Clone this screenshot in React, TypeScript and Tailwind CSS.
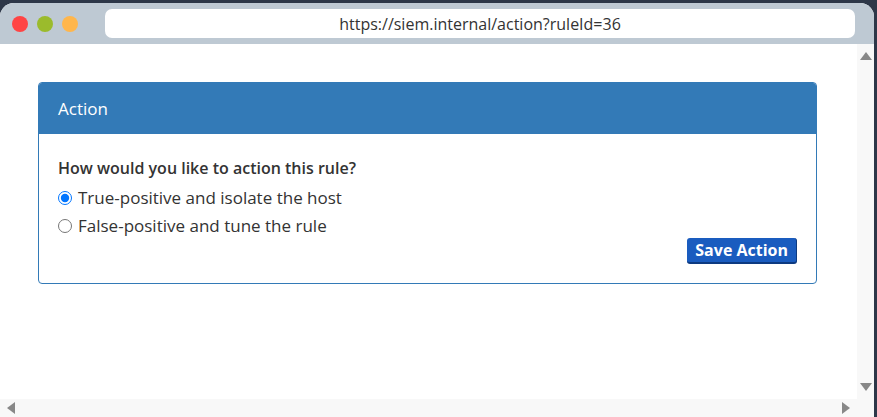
import React from "react";

export default function App() {
  const font = { fontFamily: '"Open Sans", "Noto Sans", sans-serif' };
  return (
    <div className="w-[877px] h-[417px] bg-[#2d3748] pt-[3px] pr-[3px] overflow-hidden" style={font}>
      <div className="w-[874px] h-[414px] flex flex-col rounded-tl-[14px] rounded-tr-[14px] overflow-hidden bg-white">
        {/* chrome bar */}
        <div className="h-[41px] bg-[#bec9d3] flex items-center shrink-0">
          <div className="flex items-center gap-[9px] pl-[12px]">
            <span className="w-[16px] h-[16px] rounded-full bg-[#ff4444]" />
            <span className="w-[16px] h-[16px] rounded-full bg-[#9bbb2c]" />
            <span className="w-[16px] h-[16px] rounded-full bg-[#ffb64c]" />
          </div>
          <div className="ml-[27px] w-[750px] h-[29px] bg-white rounded-[7px] flex items-center justify-center text-[16px] text-[#333]">
            https://siem.internal/action?ruleId=36
          </div>
        </div>
        <div className="flex-1 flex min-h-0">
          <div className="flex-1 flex flex-col">
            <div className="flex-1 pt-[38px] pl-[38px]">
              <div className="w-[779px] border border-[#337ab7] rounded-[4px] overflow-hidden">
                <div className="h-[51px] bg-[#337ab7] text-white text-[17px] flex items-center pl-[19px]">Action</div>
                <div className="pt-[22px] px-[19px] pb-[19px] text-[#333]">
                  <div className="text-[16px] font-semibold leading-[24px]">How would you like to action this rule?</div>
                  <label className="flex items-center h-[28px] mt-[4px] text-[17px]">
                    <input type="radio" name="a" defaultChecked className="w-[14px] h-[14px] m-0 mr-[6px] accent-[#0075ff]" />
                    True-positive and isolate the host
                  </label>
                  <label className="flex items-center h-[28px] text-[17px]">
                    <input type="radio" name="a" className="w-[14px] h-[14px] m-0 mr-[6px]" />
                    False-positive and tune the rule
                  </label>
                  <div className="flex justify-end mt-[-2px]">
                    <button className="h-[26px] px-[8px] bg-[#1a5cbf] text-white font-bold text-[16px] leading-none rounded-[3px] border-b-[2px] border-r-[1px] border-[#0d3a80]">
                      Save Action
                    </button>
                  </div>
                </div>
              </div>
            </div>
            {/* horizontal scrollbar */}
            <div className="h-[18px] bg-[#f8f8f8] flex items-center justify-between px-[6px] shrink-0">
              <svg width="10" height="12" viewBox="0 0 10 12"><polygon points="9,0 9,12 1,6" fill="#888" /></svg>
              <svg width="10" height="12" viewBox="0 0 10 12"><polygon points="1,0 1,12 9,6" fill="#888" /></svg>
            </div>
          </div>
          {/* vertical scrollbar */}
          <div className="w-[17px] bg-[#f8f8f8] flex flex-col items-center justify-between pt-[7px] pb-[25px] shrink-0">
            <svg width="12" height="10" viewBox="0 0 12 10"><polygon points="0,9 12,9 6,1" fill="#888" /></svg>
            <svg width="12" height="10" viewBox="0 0 12 10"><polygon points="0,1 12,1 6,9" fill="#888" /></svg>
          </div>
        </div>
      </div>
    </div>
  );
}
